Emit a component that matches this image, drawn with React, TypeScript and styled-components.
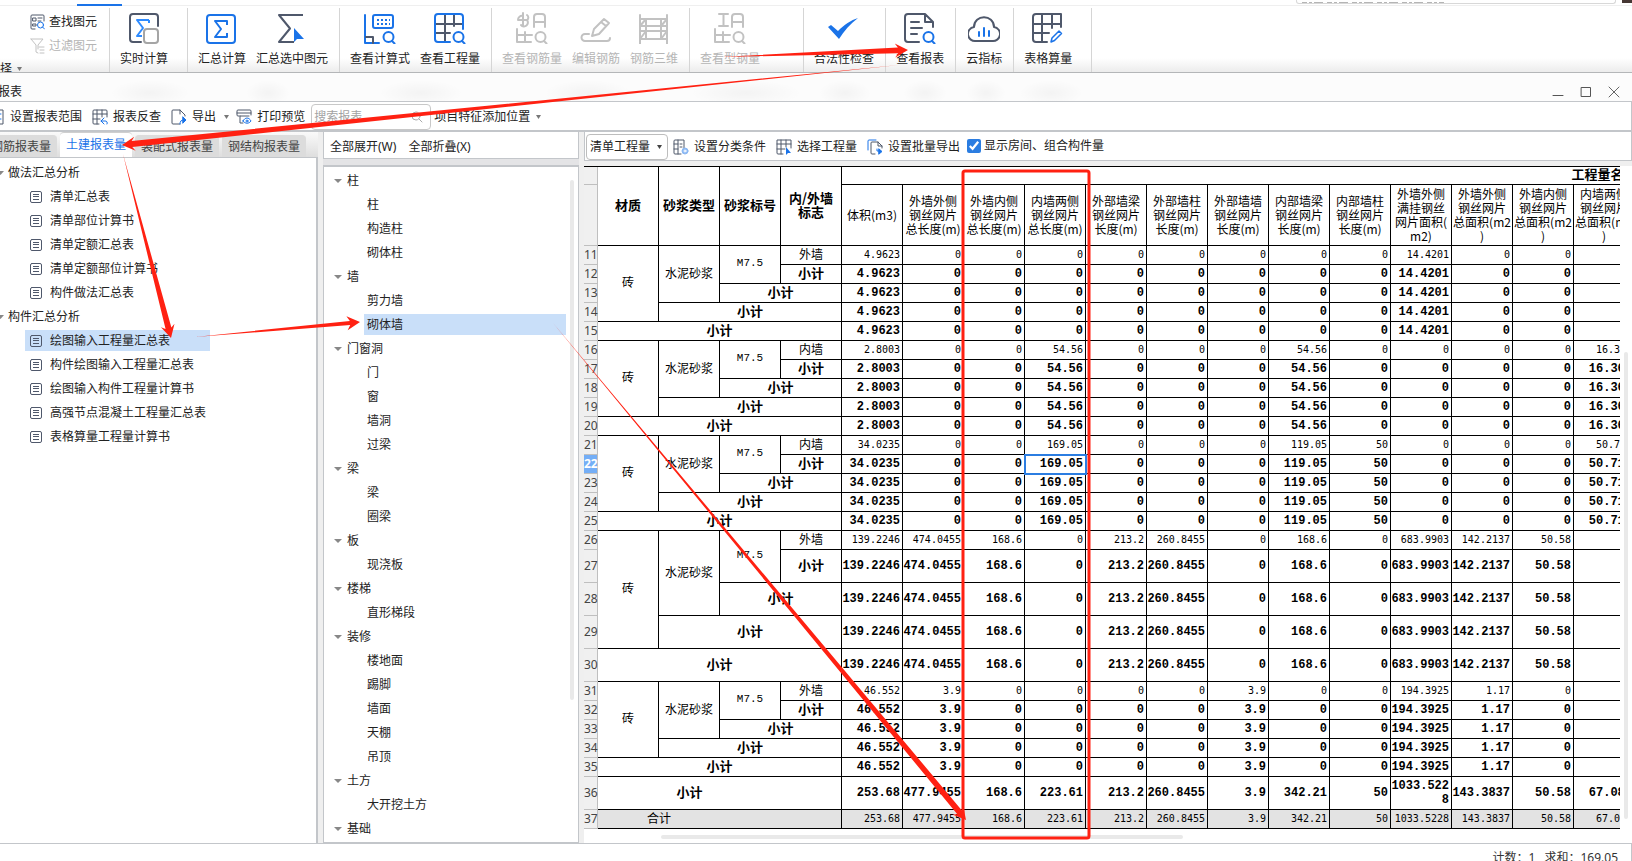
import React from "react";
import styled, { createGlobalStyle, css } from "styled-components";

const UI_FONT = `"Noto Sans", "Noto Sans CJK SC", sans-serif`;
const DARK = "#4f586b";
const BLUE = "#1a73e8";
const MUTED = "#c2c2c2";
const LINE = "#c3c6ca";
const RED = "#ff2112";

const GlobalStyle = createGlobalStyle`
  *, *::before, *::after { box-sizing: border-box; }
  body {
    margin: 0;
    overflow: hidden;
    background: #fff;
    color: #222;
    font: 12px/16px ${UI_FONT};
  }
  button, input, select { font: inherit; color: inherit; }
  ul { list-style: none; margin: 0; padding: 0; }
`;

/* ---------- page ---------- */

const Page = styled.div`
  position: relative;
  display: flex;
  flex-direction: column;
  height: 100vh;
  overflow: hidden;
`;

const MenuStrip = styled.div`
  display: flex;
  flex: none;
  justify-content: space-between;
  align-items: flex-start;
  height: 6px;
  border-bottom: 1px solid #efefef;
`;

const ActiveMenuMark = styled.div`
  width: 45px;
  height: 2px;
  margin: 4px 0 0 77px;
  background: ${BLUE};
`;

const StripEnd = styled.div`
  display: flex;
  gap: 6px;
`;

const HelpBox = styled.div`
  width: 320px;
  height: 4px;
  padding-left: 5px;
  border: 1px solid #d8d8d8;
  border-top: 0;
  border-radius: 0 0 3px 3px;
  line-height: 0;
`;

const Avatar = styled.div`
  width: 10px;
  height: 3px;
  background: #463734;
`;

/* ---------- ribbon ---------- */

const Ribbon = styled.div`
  display: flex;
  flex: none;
  height: 66px;
  padding-top: 2px;
  background: linear-gradient(#fff 52px, #ececec 66px);
`;

const RibbonGroup = styled.div<{ $width?: number }>`
  display: flex;
  gap: 10px;
  width: ${(p) => (p.$width ? `${p.$width}px` : "auto")};
  padding: 4px 11px 0 10px;
  border-right: 1px solid #d5d5d5;
`;

const FindGroup = styled.div`
  display: flex;
  flex-direction: column;
  width: 110px;
  overflow: hidden;
  border-right: 1px solid #d5d5d5;
`;

const PlainButton = styled.button<{ $muted?: boolean }>`
  display: flex;
  align-items: center;
  flex: none;
  padding: 0;
  border: 0;
  background: none;
  white-space: nowrap;
  color: ${(p) => (p.$muted ? "#b5b5b5" : "#222")};
`;

const FindButton = styled(PlainButton)`
  gap: 4px;
  height: 24px;
  margin-left: 29px;
  padding-top: 4px;
`;

const PickButton = styled(PlainButton)`
  gap: 5px;
  height: 26px;
`;

const RibbonButton = styled(PlainButton)`
  flex-direction: column;
  align-items: center;
  gap: 7px;
  height: 55px;
`;

/* ---------- report window ---------- */

const Window = styled.section`
  display: flex;
  flex: 1;
  flex-direction: column;
  min-height: 0;
  border-top: 1px solid #b4b6b8;
  background: #fff;
`;

const smudge = (x: number, w: number) =>
  `radial-gradient(${w}px 13px at ${x}px 20px, rgba(0,0,0,0.035), rgba(0,0,0,0) 100%)`;

const TitleBar = styled.header`
  display: flex;
  flex: none;
  align-items: center;
  justify-content: space-between;
  height: 29px;
  padding: 10px 12px 0 0;
  border-bottom: 1px solid ${LINE};
  background:
    ${[[150, 40], [268, 22], [421, 42], [588, 44], [746, 56], [845, 26], [925, 22], [986, 20], [1051, 32]]
      .map(([x, w]) => smudge(x, w))
      .join(",")},
    #fcfcfc;
`;

const Title = styled.h1`
  margin: 0 0 0 -2px;
  font-size: 12px;
  font-weight: 400;
`;

const WindowControls = styled.div`
  display: flex;
  gap: 16px;
`;

const Toolbar = styled.div`
  display: flex;
  flex: none;
  align-items: center;
  height: 30px;
  padding-top: 2px;
  border-right: 1px solid ${LINE};
  border-bottom: 2px solid ${LINE};
`;

const ToolButton = styled(PlainButton)<{ $lead?: boolean; $tight?: boolean }>`
  gap: 5px;
  margin-left: ${(p) => (p.$lead ? "-11px" : p.$tight ? "7px" : "10px")};
`;

const SearchBox = styled.label`
  display: flex;
  align-items: center;
  width: 120px;
  height: 26px;
  margin: 0 3px 0 6px;
  padding: 0 7px 0 2px;
  border: 1px solid #c8c8c8;
  border-radius: 4px;
`;

const SearchInput = styled.input`
  flex: 1;
  width: 20px;
  padding: 0;
  border: 0;
  outline: 0;
  background: none;
  &::placeholder { color: #a3a3a3; opacity: 1; }
`;

const Body = styled.div`
  display: flex;
  flex: 1;
  gap: 5px;
  min-height: 0;
  background: #efefef;
  border-bottom: 1px solid ${LINE};
`;

/* ---------- report list ---------- */

const ReportPane = styled.aside`
  display: flex;
  flex: none;
  flex-direction: column;
  width: 318px;
`;

const Tabs = styled.div`
  display: flex;
  flex: none;
  align-items: flex-end;
  gap: 3px;
  height: 25px;
  padding-right: 12px;
  overflow: hidden;
  background: linear-gradient(#fafafa, #dedede);
`;

const Tab = styled.button<{ $active?: boolean; $first?: boolean }>`
  flex: none;
  height: ${(p) => (p.$active ? 25 : 22)}px;
  margin-left: ${(p) => (p.$first ? "-15px" : "0")};
  padding: 0 6px;
  border: 1px solid ${(p) => (p.$active ? "#cfcfcf" : "#dcdcdc")};
  border-width: 1px 0 0;
  border-radius: 4px 4px 0 0;
  background: ${(p) => (p.$active ? "#fff" : "#dcdcdc")};
  color: ${(p) => (p.$active ? BLUE : "#444")};
  white-space: nowrap;
`;

const ReportTree = styled.div`
  flex: 1;
  padding-top: 3px;
  border-top: 1px solid ${LINE};
  border-right: 2px solid ${LINE};
  background: #fff;
`;

const ReportGroup = styled(PlainButton)`
  gap: 4px;
  height: 24px;
  margin-left: -3px;
`;

const LeafItem = styled.li`
  height: 24px;
  padding-top: 1px;
`;

const leafState = css<{ $selected?: boolean }>`
  height: 21px;
  background: ${(p) => (p.$selected ? "#c9dff9" : "none")};
`;

const ReportLeaf = styled(PlainButton)<{ $selected?: boolean }>`
  ${leafState}
  gap: 8px;
  width: 185px;
  margin-left: 25px;
  padding-left: 5px;
`;

/* ---------- component list ---------- */

const ComponentPane = styled.aside`
  display: flex;
  flex: none;
  flex-direction: column;
  gap: 6px;
  width: 256px;
  background: #e4e4e6;
`;

const ComponentBar = styled.div`
  display: flex;
  flex: none;
  align-items: center;
  gap: 12px;
  height: 27px;
  padding: 4px 0 0 6px;
  border: 1px solid ${LINE};
  border-top: 0;
  background: #fff;
`;

const ComponentTree = styled.div`
  display: flex;
  flex: 1;
  min-height: 0;
  overflow: hidden;
  border: 1px solid ${LINE};
  border-top-width: 2px;
  background: #fff;
`;

const ComponentList = styled.ul`
  flex: 1;
  padding-top: 2px;
`;

const ComponentGroup = styled(PlainButton)`
  gap: 5px;
  height: 24px;
  margin-left: 10px;
`;

const ComponentLeaf = styled(PlainButton)<{ $selected?: boolean }>`
  ${leafState}
  width: 202px;
  margin-left: 40px;
  padding-left: 3px;
`;

const VThumb = styled.div<{ $top: number; $height: number }>`
  flex: none;
  width: 4px;
  height: ${(p) => p.$height}px;
  margin: ${(p) => p.$top}px 4px 0;
  border-radius: 2px;
  background: #e9e9e9;
`;

/* ---------- quantity sheet ---------- */

const SheetPane = styled.main`
  display: flex;
  flex: 1;
  flex-direction: column;
  gap: 5px;
  min-width: 0;
`;

const SheetBar = styled.div`
  display: flex;
  flex: none;
  align-items: center;
  height: 29px;
  padding: 1px 0 0 1px;
  border: 1px solid ${LINE};
  border-top: 0;
  background: #fff;
`;

const SelectWrap = styled.span`
  display: flex;
  align-items: center;
  width: 82px;
  height: 26px;
  margin-right: -5px;
  padding-right: 5px;
  border: 1px solid #bdbdbd;
  border-radius: 4px;
`;

const KindSelect = styled.select`
  flex: 1;
  width: 60px;
  padding: 0 0 0 3px;
  border: 0;
  outline: 0;
  background: none;
  appearance: none;
`;

const CheckLabel = styled.label`
  display: flex;
  align-items: center;
  gap: 3px;
  margin-left: 7px;
  padding-bottom: 2px;
`;

const CheckBox = styled.input`
  width: 14px;
  height: 14px;
  margin: 0;
  accent-color: #2b7de1;
`;

const SheetArea = styled.div`
  display: flex;
  flex: 1;
  min-height: 0;
  background: #fff;
`;

const SheetView = styled.div`
  flex: 1;
  min-width: 0;
  overflow: hidden;
`;

const HThumb = styled.div`
  width: 522px;
  height: 4px;
  margin: 6px 0 0 77px;
  border-radius: 2px;
  background: #e9e9e9;
`;

const Sheet = styled.table`
  width: 1783px;
  table-layout: fixed;
  border-collapse: separate;
  border-spacing: 0;
  border-top: 1px solid #000;
  color: #000;
  font: 12px/14px "Noto Sans CJK SC", sans-serif;
`;

const RowNo = styled.th<{ $selected?: boolean }>`
  padding: 0;
  border: 1px solid #bfbfbf;
  border-top: 0;
  border-left: 0;
  background: ${(p) => (p.$selected ? "#74aef6" : "#f0f0f0")};
  color: ${(p) => (p.$selected ? "#fff" : "#444")};
  font-family: "Noto Sans", sans-serif;
  font-weight: ${(p) => (p.$selected ? 700 : 400)};
  text-align: center;
`;

const HeadCell = styled.th<{ $strong?: boolean }>`
  padding: ${(p) => (p.$strong ? "0 0 3px" : "0 0 1px")};
  border: solid #000;
  border-width: 0 1px 1px 0;
  font-size: ${(p) => (p.$strong ? 13 : 12)}px;
  font-weight: ${(p) => (p.$strong ? 700 : 400)};
  white-space: nowrap;
`;

const LabelCell = styled.td<{ $strong?: boolean; $open?: boolean; $code?: boolean }>`
  padding: 0 0 3px;
  border: solid #000;
  border-width: ${(p) => (p.$open ? "0 0 1px" : "0 1px 1px 0")};
  font-size: ${(p) => (p.$strong ? 13 : 12)}px;
  font-weight: ${(p) => (p.$strong ? 700 : 400)};
  text-align: center;
  white-space: nowrap;
  ${(p) => p.$code && css`font: 11px/14px "Liberation Mono", monospace;`}
`;

const NumberCell = styled.td<{ $strong?: boolean; $selected?: boolean }>`
  padding: 0 2px 1px 0;
  border: solid #000;
  border-width: 0 1px 1px 0;
  font: ${(p) =>
    p.$strong
      ? `700 12px/14px "Liberation Mono", monospace`
      : `10px/14px "DejaVu Sans Mono", monospace`};
  text-align: right;
  white-space: nowrap;
  ${(p) =>
    p.$selected &&
    css`
      outline: 2px solid #2b7de1;
      outline-offset: -1px;
    `}
`;

const Row = styled.tr<{ $height: number; $total?: boolean }>`
  height: ${(p) => p.$height}px;
  background: ${(p) => (p.$total ? "#e3e3e3" : "none")};
`;

const StatusBar = styled.footer`
  display: flex;
  flex: none;
  justify-content: flex-end;
  gap: 9px;
  height: 17px;
  padding: 6px 13px 0 0;
  overflow: hidden;
  border-right: 1px solid ${LINE};
  color: #333;
`;

const Annotations = styled.svg`
  position: absolute;
  top: 0;
  left: 0;
  pointer-events: none;
`;

/* ---------- icons ---------- */

type IconProps = { size?: number; children: React.ReactNode; color?: string; w?: number };

const Icon = ({ size = 32, children, color = DARK, w = 2 }: IconProps) => (
  <svg
    width={size}
    height={size}
    viewBox={`0 0 ${size} ${size}`}
    fill="none"
    stroke={color}
    strokeWidth={w}
    strokeLinecap="round"
    strokeLinejoin="round"
    aria-hidden="true"
  >
    {children}
  </svg>
);

const Caret = ({ color = "#777", size = 5 }: { color?: string; size?: number }) => (
  <svg width={size} height="4" viewBox="0 0 8 5" preserveAspectRatio="none" aria-hidden="true">
    <path d="M0 0h8L4 5z" fill={color} />
  </svg>
);

const Lens = ({ color = BLUE }: { color?: string }) => (
  <g stroke={color}>
    <circle cx="24.5" cy="25" r="5" />
    <path d="M28 29l2.500 2.500" />
  </g>
);

const icons = {
  live: (
    <Icon>
      <path d="M13 30H5a3 3 0 0 1-3-3V5a3 3 0 0 1 3-3h22a3 3 0 0 1 3 3v9" />
      <path d="M21 8H9l6 8-6 8h5M21 8v3" stroke="#2e8bff" strokeLinecap="butt" />
      <rect x="16" y="17" width="14" height="14" rx="3" stroke="#a5a5a5" />
    </Icon>
  ),
  sum: (
    <Icon color={BLUE}>
      <rect x="1" y="3" width="28" height="28" rx="3" />
      <path d="M21 13V9H9l6 8-6 8h12v-4" strokeLinecap="butt" />
    </Icon>
  ),
  sumSelected: (
    <Icon>
      <path d="M27 3H3l11 13.500L3 30h15" strokeLinecap="butt" />
      <path d="M18 16v14l3-3h7z" fill={BLUE} stroke="none" />
    </Icon>
  ),
  formula: (
    <Icon>
      <path d="M1 3v28h14" stroke={BLUE} />
      <path d="M2 25h7v6" />
      <rect x="9" y="3" width="20" height="13" rx="2" stroke={BLUE} />
      <path d="M13 8h2M17 8h2M21 8h2M25 8h1M13 12h2M17 12h2M21 12h2M25 12h1" stroke={BLUE} strokeLinecap="butt" />
      <Lens />
    </Icon>
  ),
  quantity: (
    <Icon>
      <path d="M11 2v28M20 2v12M2 12h27M2 21h14" />
      <path d="M16 30H4a3 3 0 0 1-3-3V5a3 3 0 0 1 3-3h22a3 3 0 0 1 3 3v12" stroke={BLUE} />
      <Lens />
    </Icon>
  ),
  rebar: (
    <Icon color={MUTED}>
      <path d="M7 1v13M7 4a4 4 0 0 0-5 4h9a3 3 0 0 1-6 5M11 3a3 3 0 0 1 0 5M1 17v13h14M2 23h14M9 20v10M18 15V5a3 3 0 0 1 3-3h5a3 3 0 0 1 3 3v10M18 10h11" />
      <Lens color={MUTED} />
    </Icon>
  ),
  editRebar: (
    <Icon color={MUTED}>
      <path d="M12 24l2-7L24 7l5 4-10 11zM21 10l5 4" />
      <path d="M9 22H5a3.500 3.500 0 0 0 0 7h22a3 3 0 0 0 3-3" />
    </Icon>
  ),
  rebar3d: (
    <Icon color={MUTED}>
      <path d="M2 3v30M29 3v30M8 7v20M23 7v20M2 7h27M2 14h27M2 19h27M2 27h27M2 14l6-7M23 14l6-7M2 27l6-8M23 27l6-8" />
    </Icon>
  ),
  steel: (
    <Icon color={MUTED}>
      <path d="M5 2h9M9.500 2v12M5 14h9M1 17v13h14M2 23h14M9 20v10M18 15V5a3 3 0 0 1 3-3h5a3 3 0 0 1 3 3v10M18 10h11" />
      <Lens color={MUTED} />
    </Icon>
  ),
  check: (
    <Icon>
      <path d="M0 15l3-2 7 6C16 13 23 8 30 6 22 12 16 19 11 27z" fill={BLUE} stroke="none" />
    </Icon>
  ),
  report: (
    <Icon>
      <path d="M15 30H4a3 3 0 0 1-3-3V5a3 3 0 0 1 3-3h17l8 8v5M21 2v8h8M7 10h8M7 16h11M7 22h6" />
      <Lens />
    </Icon>
  ),
  cloud: (
    <Icon>
      <path d="M8 29a7 7 0 0 1-2-14C6 2 26 2 26 15a7 7 0 0 1-2 14z" />
      <path d="M11 20v4M16 16v8M21 19v5" stroke={BLUE} />
    </Icon>
  ),
  sheet: (
    <Icon>
      <path d="M15 30H4a3 3 0 0 1-3-3V5a3 3 0 0 1 3-3h25v13M1 12h28M1 21h16M10 2v28M20 2v14" />
      <path d="M19 30l1-4 7-7 2.500 2.500-7 7z" stroke={BLUE} strokeWidth="1.500" />
    </Icon>
  ),
};

const small = {
  find: (
    <Icon size={16} w={1}>
      <path d="M6 15H3a1 1 0 0 1-1-1V2a1 1 0 0 1 1-1h11a1 1 0 0 1 1 1v5M4 4h3v3H4zM4 10h3v2H4zM9 4h4M9 7h3" />
      <circle cx="11.500" cy="11" r="3" stroke={BLUE} />
      <path d="M13.500 13l2 2" stroke={BLUE} />
    </Icon>
  ),
  filter: (
    <Icon size={16} w={1} color={MUTED}>
      <path d="M2 1h12L9 7v4M2 1l5 6v7l2 1M10 9h5M11 12h4M11 15h4" />
    </Icon>
  ),
  range: (
    <Icon size={16} w={1}>
      <path d="M2 1h12v14H2z" />
      <path d="M5 5h7M5 10h7" stroke={BLUE} strokeDasharray="1 2" />
    </Icon>
  ),
  review: (
    <Icon size={16} w={1}>
      <path d="M7 15H2a1 1 0 0 1-1-1V2a1 1 0 0 1 1-1h12a1 1 0 0 1 1 1v6M1 5h14M1 10h7M5 1v14M10 1v7" />
      <path d="M12 9l-3 3 3 3M9 12h4a2 2 0 0 1 2 3" stroke={BLUE} />
    </Icon>
  ),
  exportFile: (
    <Icon size={16} w={1}>
      <path d="M9 15H2a1 1 0 0 1-1-1V2a1 1 0 0 1 1-1h7l5 5v1M9 1v4" />
      <path d="M9 15c0-3 1-4 4-4" stroke={BLUE} />
      <path d="M12 8l3 3-3 3z" stroke={BLUE} fill={BLUE} />
    </Icon>
  ),
  print: (
    <Icon size={16} w={1}>
      <path d="M3 7H2a1 1 0 0 1-1-1V2a1 1 0 0 1 1-1h12a1 1 0 0 1 1 1v4M1 4h14M4 7v7h3M4 7h9" />
      <path d="M7 12c2-4 6-4 8 0-2 3-6 3-8 0z" stroke={BLUE} />
      <circle cx="11" cy="12" r="1" stroke={BLUE} />
    </Icon>
  ),
  classify: (
    <Icon size={16} w={1}>
      <path d="M8 15H2a1 1 0 0 1-1-1V2a1 1 0 0 1 1-1h9v8M5 1v14M1 5h4M1 10h4M7 5h2M7 8h2" />
      <circle cx="12" cy="12" r="3" stroke="#8bb8f3" fill="#8bb8f3" />
      <circle cx="12" cy="12" r="1" stroke="#fff" />
    </Icon>
  ),
  choose: (
    <Icon size={16} w={1}>
      <path d="M7 15H2a1 1 0 0 1-1-1V1h14v8M1 5h14M1 10h8M5 1v14M10 1v7" />
      <path d="M10 8v8l2-2h3z" fill={BLUE} stroke="none" />
    </Icon>
  ),
  batch: (
    <Icon size={16} w={1}>
      <path d="M8 15H5a1 1 0 0 1-1-1V4a1 1 0 0 1 1-1h6l4 4v2M11 3v4h4" />
      <path d="M1 11V2a1 1 0 0 1 1-1h7M10 10v2h3" stroke={BLUE} />
      <path d="M12 10l3 2.500-3 2.500z" stroke={BLUE} fill={BLUE} />
    </Icon>
  ),
  doc: (
    <Icon size={12} w={1}>
      <rect x="0.500" y="0.500" width="11" height="11" rx="1.500" />
      <path d="M3 3.500h6M3 5.500h6M3 8.500h6" strokeLinecap="butt" />
    </Icon>
  ),
  search: (
    <Icon size={12} w={1} color="#aaa">
      <circle cx="5" cy="5" r="4" />
      <path d="M8 8l3 3" />
    </Icon>
  ),
  min: <Icon size={12} w={1} color="#555"><path d="M1 9.500h10" /></Icon>,
  max: <Icon size={12} w={1} color="#555"><path d="M1.500 1.500h9v9h-9z" /></Icon>,
  close: <Icon size={12} w={1} color="#666"><path d="M1 1l10 10M11 1L1 11" /></Icon>,
};

/* ---------- data ---------- */

type Tool = { label: string; icon: React.ReactNode; muted?: boolean };

const ribbonGroups: { width?: number; tools: Tool[] }[] = [
  { width: 78, tools: [{ label: "实时计算", icon: icons.live }] },
  { tools: [{ label: "汇总计算", icon: icons.sum }, { label: "汇总选中图元", icon: icons.sumSelected }] },
  { tools: [{ label: "查看计算式", icon: icons.formula }, { label: "查看工程量", icon: icons.quantity }] },
  {
    tools: [
      { label: "查看钢筋量", icon: icons.rebar, muted: true },
      { label: "编辑钢筋", icon: icons.editRebar, muted: true },
      { label: "钢筋三维", icon: icons.rebar3d, muted: true },
    ],
  },
  { width: 114, tools: [{ label: "查看型钢量", icon: icons.steel, muted: true }] },
  { tools: [{ label: "合法性检查", icon: icons.check }] },
  { tools: [{ label: "查看报表", icon: icons.report }] },
  { tools: [{ label: "云指标", icon: icons.cloud }] },
  { width: 78, tools: [{ label: "表格算量", icon: icons.sheet }] },
];

const reportTree = [
  { name: "做法汇总分析", items: ["清单汇总表", "清单部位计算书", "清单定额汇总表", "清单定额部位计算书", "构件做法汇总表"] },
  {
    name: "构件汇总分析",
    items: ["绘图输入工程量汇总表", "构件绘图输入工程量汇总表", "绘图输入构件工程量计算书", "高强节点混凝土工程量汇总表", "表格算量工程量计算书"],
  },
];

const componentTree = [
  { name: "柱", items: ["柱", "构造柱", "砌体柱"] },
  { name: "墙", items: ["剪力墙", "砌体墙"] },
  { name: "门窗洞", items: ["门", "窗", "墙洞", "过梁"] },
  { name: "梁", items: ["梁", "圈梁"] },
  { name: "板", items: ["现浇板"] },
  { name: "楼梯", items: ["直形梯段"] },
  { name: "装修", items: ["楼地面", "踢脚", "墙面", "天棚", "吊顶"] },
  { name: "土方", items: ["大开挖土方"] },
  { name: "基础", items: [] },
];

const quantityHeads = [
  ["体积(m3)"],
  ["外墙外侧", "钢丝网片", "总长度(m)"],
  ["外墙内侧", "钢丝网片", "总长度(m)"],
  ["内墙两侧", "钢丝网片", "总长度(m)"],
  ["外部墙梁", "钢丝网片", "长度(m)"],
  ["外部墙柱", "钢丝网片", "长度(m)"],
  ["外部墙墙", "钢丝网片", "长度(m)"],
  ["内部墙梁", "钢丝网片", "长度(m)"],
  ["内部墙柱", "钢丝网片", "长度(m)"],
  ["外墙外侧", "满挂钢丝", "网片面积(", "m2)"],
  ["外墙外侧", "钢丝网片", "总面积(m2", ")"],
  ["外墙内侧", "钢丝网片", "总面积(m2", ")"],
  ["内墙两侧", "钢丝网片", "总面积(m2", ")"],
];

const groups = [
  { from: 11, side: "外墙", tall: false, values: "4.9623 0 0 0 0 0 0 0 0 14.4201 0 0 0" },
  { from: 16, side: "内墙", tall: false, values: "2.8003 0 0 54.56 0 0 0 54.56 0 0 0 0 16.368" },
  { from: 21, side: "内墙", tall: false, values: "34.0235 0 0 169.05 0 0 0 119.05 50 0 0 0 50.715" },
  { from: 26, side: "外墙", tall: true, values: "139.2246 474.0455 168.6 0 213.2 260.8455 0 168.6 0 683.9903 142.2137 50.58 0" },
  { from: 31, side: "外墙", tall: false, values: "46.552 3.9 0 0 0 0 3.9 0 0 194.3925 1.17 0 0" },
];

const totals = "253.68 477.9455 168.6 223.61 213.2 260.8455 3.9 342.21 50 1033.5228 143.3837 50.58 67.083".split(" ");

const SELECTED_ROW = 22;
const SELECTED_COLUMN = 3;

/* ---------- parts ---------- */

const Numbers = ({ values, strong, row }: { values: string[]; strong?: boolean; row: number }) => (
  <>
    {values.map((v, i) => (
      <NumberCell key={i} $strong={strong} $selected={row === SELECTED_ROW && i === SELECTED_COLUMN}>
        {strong && v.length > 8 ? (
          <>
            {v.slice(0, 8)}
            <br />
            {v.slice(8)}
          </>
        ) : (
          v
        )}
      </NumberCell>
    ))}
    <NumberCell />
  </>
);

const GroupRows = ({ from, side, tall, values }: (typeof groups)[number]) => {
  const nums = values.split(" ");
  return (
    <>
      {[0, 1, 2, 3, 4].map((n) => (
        <Row key={n} $height={tall && n > 0 ? 33 : 19}>
          <RowNo $selected={from + n === SELECTED_ROW}>{from + n}</RowNo>
          {n === 0 && (
            <>
              <LabelCell rowSpan={4}>砖</LabelCell>
              <LabelCell rowSpan={3}>水泥砂浆</LabelCell>
              <LabelCell rowSpan={2} $code>M7.5</LabelCell>
              <LabelCell>{side}</LabelCell>
            </>
          )}
          {n > 0 && <LabelCell $strong colSpan={n}>小计</LabelCell>}
          <Numbers values={nums} strong={n > 0} row={from + n} />
        </Row>
      ))}
    </>
  );
};

type Point = [number, number];

/* A tapered arrow: hairline at the tail, widening into a barbed head. */
const Arrow = ({ from, to, width = 3 }: { from: Point; to: Point; width?: number }) => {
  const dx = to[0] - from[0];
  const dy = to[1] - from[1];
  const len = Math.hypot(dx, dy);
  const at = (back: number, side: number) =>
    `${to[0] - (dx / len) * back - (dy / len) * side},${to[1] - (dy / len) * back + (dx / len) * side}`;
  const points = [
    `${from[0]},${from[1]}`,
    at(10, width),
    at(13, 7),
    at(0, 0),
    at(13, -7),
    at(10, -width),
  ];
  return <polygon points={points.join(" ")} fill={RED} />;
};

export default function App() {
  return (
    <Page>
      <GlobalStyle />
      <MenuStrip>
        <ActiveMenuMark />
        <StripEnd>
          <HelpBox>
            <svg width="150" height="2" aria-hidden="true">
              <path d="M0 0.500h142" stroke="#b5b5b5" strokeDasharray="5 2 3 2 9 4" />
            </svg>
          </HelpBox>
          <Avatar />
        </StripEnd>
      </MenuStrip>

      <Ribbon>
        <FindGroup>
          <FindButton>{small.find}查找图元</FindButton>
          <FindButton $muted>{small.filter}过滤图元</FindButton>
          <PickButton>择<Caret /></PickButton>
        </FindGroup>
        {ribbonGroups.map((g, i) => (
          <RibbonGroup key={i} $width={g.width}>
            {g.tools.map((t) => (
              <RibbonButton key={t.label} $muted={t.muted}>
                {t.icon}
                {t.label}
              </RibbonButton>
            ))}
          </RibbonGroup>
        ))}
      </Ribbon>

      <Window>
        <TitleBar>
          <Title>报表</Title>
          <WindowControls>
            <PlainButton aria-label="最小化">{small.min}</PlainButton>
            <PlainButton aria-label="最大化">{small.max}</PlainButton>
            <PlainButton aria-label="关闭">{small.close}</PlainButton>
          </WindowControls>
        </TitleBar>

        <Toolbar>
          <ToolButton $lead>{small.range}设置报表范围</ToolButton>
          <ToolButton>{small.review}报表反查</ToolButton>
          <ToolButton>{small.exportFile}导出&nbsp;<Caret /></ToolButton>
          <ToolButton $tight>{small.print}打印预览</ToolButton>
          <SearchBox>
            <SearchInput placeholder="搜索报表" aria-label="搜索报表" />
            {small.search}
          </SearchBox>
          <PlainButton>项目特征添加位置&nbsp;&nbsp;<Caret /></PlainButton>
        </Toolbar>

        <Body>
          <ReportPane>
            <Tabs>
              <Tab $first>钢筋报表量</Tab>
              <Tab $active>土建报表量</Tab>
              <Tab>装配式报表量</Tab>
              <Tab>钢结构报表量</Tab>
            </Tabs>
            <ReportTree>
              <ul>
                {reportTree.map((g) => (
                  <li key={g.name}>
                    <ReportGroup><Caret size={7} color="#888" />{g.name}</ReportGroup>
                    <ul>
                      {g.items.map((name) => (
                        <LeafItem key={name}>
                          <ReportLeaf $selected={name === "绘图输入工程量汇总表"}>{small.doc}{name}</ReportLeaf>
                        </LeafItem>
                      ))}
                    </ul>
                  </li>
                ))}
              </ul>
            </ReportTree>
          </ReportPane>

          <ComponentPane>
            <ComponentBar>
              <PlainButton>全部展开(W)</PlainButton>
              <PlainButton>全部折叠(X)</PlainButton>
            </ComponentBar>
            <ComponentTree>
              <ComponentList>
                {componentTree.map((g) => (
                  <li key={g.name}>
                    <ComponentGroup><Caret size={8} color="#888" />{g.name}</ComponentGroup>
                    <ul>
                      {g.items.map((name) => (
                        <LeafItem key={name}>
                          <ComponentLeaf $selected={name === "砌体墙"}>{name}</ComponentLeaf>
                        </LeafItem>
                      ))}
                    </ul>
                  </li>
                ))}
              </ComponentList>
              <VThumb $top={13} $height={520} />
            </ComponentTree>
          </ComponentPane>

          <SheetPane>
            <SheetBar>
              <SelectWrap>
                <KindSelect aria-label="工程量类型" defaultValue="清单工程量">
                  <option>清单工程量</option>
                </KindSelect>
                <Caret color="#444" />
              </SelectWrap>
              <ToolButton>{small.classify}设置分类条件</ToolButton>
              <ToolButton>{small.choose}选择工程量</ToolButton>
              <ToolButton>{small.batch}设置批量导出</ToolButton>
              <CheckLabel>
                <CheckBox type="checkbox" defaultChecked />
                显示房间、组合构件量
              </CheckLabel>
            </SheetBar>
            <SheetArea>
              <SheetView>
                <Sheet>
                  <colgroup>
                    <col style={{ width: 14 }} />
                    {Array.from({ length: 17 }, (_, i) => (
                      <col key={i} style={{ width: 61 }} />
                    ))}
                    <col style={{ width: 732 }} />
                  </colgroup>
                  <thead>
                    <Row $height={18}>
                      <RowNo />
                      <HeadCell $strong rowSpan={2}>材质</HeadCell>
                      <HeadCell $strong rowSpan={2}>砂浆类型</HeadCell>
                      <HeadCell $strong rowSpan={2}>砂浆标号</HeadCell>
                      <HeadCell $strong rowSpan={2}>内/外墙<br />标志</HeadCell>
                      <HeadCell $strong colSpan={14}>工程量名称</HeadCell>
                    </Row>
                    <Row $height={61}>
                      <RowNo />
                      {quantityHeads.map((lines, i) => (
                        <HeadCell key={i}>
                          {lines.map((line, n) => (
                            <React.Fragment key={n}>
                              {n > 0 && <br />}
                              {line}
                            </React.Fragment>
                          ))}
                        </HeadCell>
                      ))}
                      <HeadCell />
                    </Row>
                  </thead>
                  <tbody>
                    {groups.map((g) => (
                      <GroupRows key={g.from} {...g} />
                    ))}
                    <Row $height={33}>
                      <RowNo>36</RowNo>
                      <LabelCell $strong $open colSpan={3}>小计</LabelCell>
                      <LabelCell />
                      <Numbers values={totals} strong row={36} />
                    </Row>
                    <Row $height={19} $total>
                      <RowNo>37</RowNo>
                      <LabelCell $open colSpan={2}>合计</LabelCell>
                      <LabelCell colSpan={2} />
                      <Numbers values={totals} row={37} />
                    </Row>
                  </tbody>
                </Sheet>
                <HThumb />
              </SheetView>
              <VThumb $top={186} $height={467} />
            </SheetArea>
          </SheetPane>
        </Body>

        <StatusBar>
          <span>计数：1</span>
          <span>求和：169.05</span>
        </StatusBar>
      </Window>

      <Annotations width="1632" height="861" viewBox="0 0 1632 861" aria-hidden="true">
        <rect x="963" y="171" width="126" height="667" rx="2" fill="none" stroke={RED} strokeWidth="3" />
        <Arrow from={[721, 57]} to={[908, 50]} />
        <Arrow from={[899, 65]} to={[122, 145]} />
        <Arrow from={[123, 154]} to={[171, 338]} />
        <Arrow from={[195, 337]} to={[360, 322]} width={2} />
        <Arrow from={[553, 323]} to={[966, 820]} />
      </Annotations>
    </Page>
  );
}
